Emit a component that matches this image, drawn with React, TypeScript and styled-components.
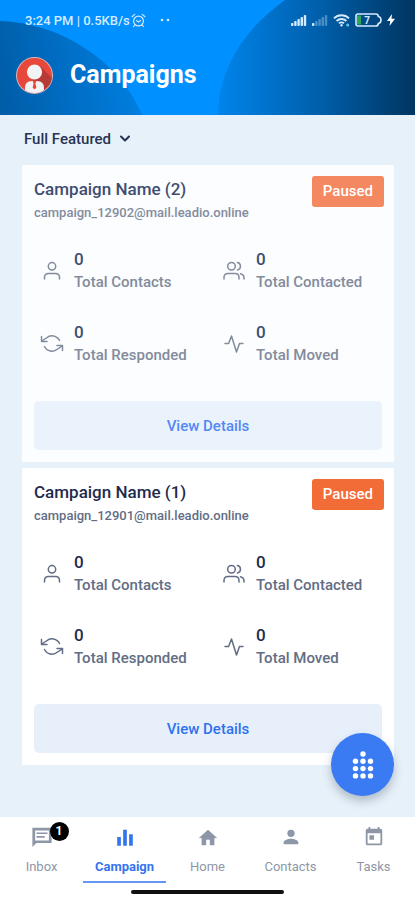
import React from "react";
import styled, { createGlobalStyle } from "styled-components";

const GlobalStyle = createGlobalStyle`
  * { box-sizing: border-box; }
  body { margin: 0; background: #e7f1fa; font-family: Roboto, "Liberation Sans", sans-serif; }
  button, a, select { font: inherit; }
  svg { display: block; flex: none; }
`;

const Page = styled.div`
  min-height: 100vh;
  display: flex;
  flex-direction: column;
`;

const Header = styled.header`
  position: relative;
  height: 115px;
  background: #0090ff;
  color: #fff;
  overflow: hidden;
`;

const Backdrop = styled.svg`
  position: absolute;
  inset: 0;
  width: 100%;
  height: 100%;
`;

const StatusBar = styled.div`
  position: relative;
  display: flex;
  justify-content: space-between;
  align-items: center;
  height: 40px;
  padding: 0 20px 0 25px;
  font-size: 13px;
  font-weight: 500;
  color: #d4eaff;
`;

const StatusGroup = styled.div<{ $gap: number }>`
  display: flex;
  align-items: center;
  gap: ${(p) => p.$gap}px;
`;

const TitleBar = styled.div`
  position: relative;
  display: flex;
  align-items: center;
  gap: 16px;
  padding: 15px 15px 0;
`;

const Title = styled.h1`
  margin: 0;
  font-size: 25px;
  line-height: 40px;
  font-weight: 700;
`;

const Main = styled.main`
  flex: 1;
  padding: 14px 21px 52px 22px;
`;

const Filter = styled.button`
  display: flex;
  align-items: center;
  gap: 8px;
  border: 0;
  padding: 0 2px;
  margin-bottom: 16px;
  background: none;
  color: #263353;
  font-size: 15px;
  line-height: 20px;
  font-weight: 500;
`;

const CardList = styled.div`
  display: grid;
  gap: 6px;
`;

const Card = styled.article<{ $muted: boolean }>`
  padding: 12px;
  background: ${(p) => (p.$muted ? "#fbfdff" : "#fff")};
  --ink: ${(p) => (p.$muted ? "#3e4e70" : "#1f2b4e")};
  --label: ${(p) => (p.$muted ? "#838b9d" : "#626d85")};
  --link: ${(p) => (p.$muted ? "#5388f5" : "#2f70f0")};
  --badge: ${(p) => (p.$muted ? "#f48860" : "#f26c38")};
  --soft: ${(p) => (p.$muted ? "#eaf3fb" : "#e7f0fa")};
`;

const CardHead = styled.div`
  display: flex;
  justify-content: space-between;
  align-items: flex-start;
`;

const CardTitle = styled.h2`
  margin: 0;
  color: var(--ink);
  font-size: 17px;
  line-height: 24px;
  font-weight: 500;
`;

const Email = styled.p`
  margin: 0;
  color: var(--label);
  font-size: 13px;
  line-height: 24px;
  font-weight: 500;
`;

const Badge = styled.span`
  margin: -1px -2px 0 0;
  padding: 0 11px;
  border-radius: 3px;
  background: var(--badge);
  color: #fff;
  font-size: 15px;
  line-height: 31px;
  font-weight: 500;
`;

const Stats = styled.dl`
  display: grid;
  grid-template-columns: 182px 1fr;
  row-gap: 27px;
  margin: 23px 0 34px;
`;

const Stat = styled.div`
  display: grid;
  grid-template-columns: 24px 1fr;
  column-gap: 10px;
  align-items: center;
  padding-left: 6px;
  color: var(--label);
`;

const StatText = styled.div`
  display: flex;
  flex-direction: column-reverse;
`;

const StatLabel = styled.dt`
  font-size: 15px;
  line-height: 23px;
  font-weight: 500;
  white-space: nowrap;
`;

const StatValue = styled.dd`
  margin: 0;
  color: var(--ink);
  font-size: 17px;
  line-height: 23px;
  font-weight: 500;
`;

const Details = styled.button`
  display: block;
  width: 100%;
  height: 49px;
  border: 0;
  border-radius: 5px;
  background: var(--soft);
  color: var(--link);
  font-size: 15px;
  font-weight: 500;
`;

const Footer = styled.footer`
  position: sticky;
  bottom: 0;
  background: #fff;
`;

const Fab = styled.button`
  position: absolute;
  right: 21px;
  bottom: calc(100% + 21px);
  display: grid;
  place-items: center;
  width: 63px;
  height: 63px;
  border: 0;
  border-radius: 50%;
  padding: 0;
  background: #3a7bf3;
  color: #fff;
  box-shadow: 0 5px 10px rgba(40, 60, 80, 0.3);
`;

const Tabs = styled.nav`
  display: grid;
  grid-template-columns: repeat(5, 1fr);
`;

const Tab = styled.a<{ $active: boolean }>`
  display: flex;
  flex-direction: column;
  align-items: center;
  gap: 9px;
  height: 66px;
  padding-top: 9px;
  border-bottom: 2px solid ${(p) => (p.$active ? "#6395f2" : "transparent")};
  color: ${(p) => (p.$active ? "#3474ee" : "#8e97a8")};
  font-size: 13px;
  line-height: 20px;
  font-weight: ${(p) => (p.$active ? 700 : 400)};
  text-decoration: none;
`;

const TabIcon = styled.span`
  position: relative;
`;

const Count = styled.span`
  position: absolute;
  left: 19px;
  top: -4px;
  width: 19px;
  height: 19px;
  border-radius: 50%;
  background: #000;
  color: #fff;
  font-size: 12px;
  line-height: 19px;
  font-weight: 700;
  text-align: center;
`;

const HomeBar = styled.div`
  width: 153px;
  max-width: 60%;
  height: 4px;
  margin: 7px auto 6px;
  border-radius: 2px;
  background: #111;
`;

const HeaderBackdrop = () => (
  <Backdrop viewBox="0 0 415 115" preserveAspectRatio="none" aria-hidden="true">
    <defs>
      <linearGradient id="left" gradientUnits="userSpaceOnUse" x1="0" y1="90" x2="145" y2="60">
        <stop offset="0" stopColor="#005da8" />
        <stop offset="1" stopColor="#0081e5" />
      </linearGradient>
      <linearGradient id="right" gradientUnits="userSpaceOnUse" x1="218" y1="0" x2="415" y2="0">
        <stop offset="0" stopColor="#0084eb" />
        <stop offset="0.5" stopColor="#0060ad" />
        <stop offset="1" stopColor="#003560" />
      </linearGradient>
    </defs>
    <path d="M0 21C60 23 119 60 142 115H0Z" fill="url(#left)" />
    <path d="M285 0C245 29 219 66 218 115H415V0Z" fill="url(#right)" />
  </Backdrop>
);

const AlarmIcon = () => (
  <svg width="15" height="15" viewBox="0 0 15 15" fill="none" stroke="currentColor" strokeWidth="1.2" strokeLinecap="round">
    <circle cx="7.5" cy="8" r="4.9" />
    <path d="M1 3.7 3.8 1.4M14 3.7 11.2 1.4M3.8 12l-1.2 1.5M11.2 12l1.2 1.5M5.5 7.5l2 1.6 2-1.6" />
  </svg>
);

const SignalIcon = ({ level }: { level: number }) => (
  <svg width="16" height="12" viewBox="0 0 16 12" fill="currentColor">
    {[3, 5, 7, 9, 11].map((h, i) => (
      <rect key={h} x={i * 3.2} y={12 - h} width="2.4" height={h} rx="0.8" opacity={i < level ? 1 : 0.35} />
    ))}
  </svg>
);

const WifiIcon = () => (
  <svg width="17" height="13" viewBox="0 0 17 13" fill="none" stroke="currentColor" strokeWidth="1.9">
    <path d="M1 4.3C5 .2 12 .2 16 4.3M3.6 7c2.7-2.7 7.1-2.7 9.8 0M6 9.4c1.4-1.4 3.6-1.4 5 0" />
    <circle cx="8.5" cy="11.3" r="1.2" fill="currentColor" stroke="none" />
    <circle cx="14.7" cy="11" r="1.5" fill="#65c5e8" stroke="none" />
  </svg>
);

const BatteryIcon = () => (
  <svg width="27" height="14" viewBox="0 0 27 14">
    <rect x="2" y="2.5" width="4" height="9" fill="#31a45a" />
    <path d="M3 1H21q2 0 2.4 2.5Q26 4 26 7t-2.6 3.5Q23 13 21 13H3Q1 13 1 11V3Q1 1 3 1Z" fill="none" stroke="currentColor" strokeWidth="1.6" />
    <text x="12" y="10.5" fontSize="10" fontWeight="700" textAnchor="middle" fill="currentColor">7</text>
  </svg>
);

const BoltIcon = () => (
  <svg width="8" height="12" viewBox="0 0 8 12" fill="#fff">
    <path d="M5 0 0 7h3.3L2.5 12 8 4.8H4.5Z" />
  </svg>
);

const Avatar = () => (
  <svg width="39" height="39" viewBox="0 0 39 39" role="img" aria-label="Profile">
    <defs><clipPath id="face"><circle cx="19.5" cy="19.5" r="17.5" /></clipPath></defs>
    <circle cx="19.5" cy="19.5" r="18.5" fill="#d9b6bd" />
    <g clipPath="url(#face)">
      <path d="M0 0H39V39H0Z" fill="#e8473b" />
      <path d="M25 10 39 24V39H27L18 24Z" fill="#b73a36" />
      <path d="M10 39V32q0-7 7-7h5q7 0 7 7v7Z" fill="#f3f3f5" />
      <circle cx="19.5" cy="16" r="7.6" fill="#f3f3f5" />
      <path d="m17.700 25.500 1.800-1 1.800 1-.9 2 1 4-1.900 2-1.900-2 1-4Z" fill="#e8473b" />
    </g>
  </svg>
);

const strokeProps = { fill: "none", stroke: "currentColor", strokeWidth: 1.5, strokeLinecap: "round", strokeLinejoin: "round" } as const;

const statIcons: Record<string, React.ReactNode> = {
  person: (
    <svg width="24" height="24" viewBox="0 0 24 24" {...strokeProps}>
      <circle cx="12" cy="7.3" r="3.7" />
      <path d="M4.5 20v-1.500q0-4 4-4h7q4 0 4 4V20" />
    </svg>
  ),
  people: (
    <svg width="24" height="24" viewBox="0 0 24 24" {...strokeProps}>
      <circle cx="9.5" cy="7.3" r="3.8" />
      <path d="M2 20v-1.500q0-4 4-4h7q4 0 4 4V20M15.500 3.600a3.800 3.800 0 0 1 0 7.400M18.500 14.700q3.500.8 3.500 4V20" />
    </svg>
  ),
  sync: (
    <svg width="24" height="24" viewBox="0 0 24 24" {...strokeProps}>
      <path d="M1.500 4.500v5H7M22.500 18.500v-5H17M2 9l3.500-2.500M22 14l-3.500 2.500M6.500 6A8.200 8.200 0 0 1 19.500 8.500M17.500 17A8.200 8.200 0 0 1 4.500 14.500" />
    </svg>
  ),
  pulse: (
    <svg width="24" height="24" viewBox="0 0 24 24" {...strokeProps}>
      <path d="M3 11.500h3.600L9.500 4l5 16L17.500 11.500H21" />
    </svg>
  ),
};

const stats = [
  { icon: "person", label: "Total Contacts" },
  { icon: "people", label: "Total Contacted" },
  { icon: "sync", label: "Total Responded" },
  { icon: "pulse", label: "Total Moved" },
];

const campaigns = [
  { name: "Campaign Name (2)", email: "campaign_12902@mail.leadio.online", muted: true },
  { name: "Campaign Name (1)", email: "campaign_12901@mail.leadio.online", muted: false },
];

const tabs = [
  { label: "Inbox", count: 1, d: "M1.500 2h21v16.500H6L1.500 23ZM4.500 4.800v11h15v-11ZM6 7h12v1.800H6ZM6 11h9v1.800H6Z" },
  { label: "Campaign", active: true, d: "M3.500 12h4v9.500h-4ZM10 4h4v17.500h-4ZM16.500 9h4v12.500h-4Z" },
  { label: "Home", d: "M10 21v-6h4v6h5v-8h3L12 4 2 13h3v8Z" },
  { label: "Contacts", d: "M12 12a4 4 0 1 0 0-8 4 4 0 0 0 0 8Zm0 2c-2.700 0-8 1.300-8 4v2h16v-2c0-2.700-5.300-4-8-4Z" },
  { label: "Tasks", d: "M19 3h-1V1h-2v2H8V1H6v2H5a2 2 0 0 0-2 2v14a2 2 0 0 0 2 2h14a2 2 0 0 0 2-2V5a2 2 0 0 0-2-2Zm0 16H5V8h14ZM7 10h5v5H7Z" },
];

export default function App() {
  return (
    <Page>
      <GlobalStyle />
      <Header>
        <HeaderBackdrop />
        <StatusBar>
          <StatusGroup $gap={1}>
            <span>3:24 PM | 0.5KB/s</span>
            <AlarmIcon />
            <svg width="26" height="4" viewBox="0 0 26 4" fill="currentColor">
              <circle cx="15" cy="2" r="1.3" />
              <circle cx="21" cy="2" r="1.3" />
            </svg>
          </StatusGroup>
          <StatusGroup $gap={5}>
            <SignalIcon level={5} />
            <SignalIcon level={1} />
            <WifiIcon />
            <BatteryIcon />
            <BoltIcon />
          </StatusGroup>
        </StatusBar>
        <TitleBar>
          <Avatar />
          <Title>Campaigns</Title>
        </TitleBar>
      </Header>
      <Main>
        <Filter type="button" aria-haspopup="listbox">
          Full Featured
          <svg width="12" height="8" viewBox="0 0 12 8" {...strokeProps} strokeWidth={2}>
            <path d="m2 1.500 4 4 4-4" />
          </svg>
        </Filter>
        <CardList>
          {campaigns.map((c) => (
            <Card key={c.name} $muted={c.muted}>
              <CardHead>
                <div>
                  <CardTitle>{c.name}</CardTitle>
                  <Email>{c.email}</Email>
                </div>
                <Badge>Paused</Badge>
              </CardHead>
              <Stats>
                {stats.map((s) => (
                  <Stat key={s.label}>
                    {statIcons[s.icon]}
                    <StatText>
                      <StatLabel>{s.label}</StatLabel>
                      <StatValue>0</StatValue>
                    </StatText>
                  </Stat>
                ))}
              </Stats>
              <Details type="button">View Details</Details>
            </Card>
          ))}
        </CardList>
      </Main>
      <Footer>
        <Fab type="button" aria-label="Open dial pad">
          <svg width="24" height="30" viewBox="0 0 24 30" fill="currentColor">
            <circle cx="12" cy="4" r="2.700" />
            {[11.3, 18.6, 25.9].map((y) => [4.5, 12, 19.5].map((x) => <circle key={`${x}-${y}`} cx={x} cy={y} r="2.700" />))}
          </svg>
        </Fab>
        <Tabs>
          {tabs.map((t) => (
            <Tab key={t.label} href="#" $active={!!t.active} aria-current={t.active ? "page" : undefined}>
              <TabIcon>
                <svg width="22" height="22" viewBox="0 0 24 24" fill="currentColor" fillRule="evenodd">
                  <path d={t.d} />
                </svg>
                {t.count && <Count>{t.count}</Count>}
              </TabIcon>
              {t.label}
            </Tab>
          ))}
        </Tabs>
        <HomeBar />
      </Footer>
    </Page>
  );
}
